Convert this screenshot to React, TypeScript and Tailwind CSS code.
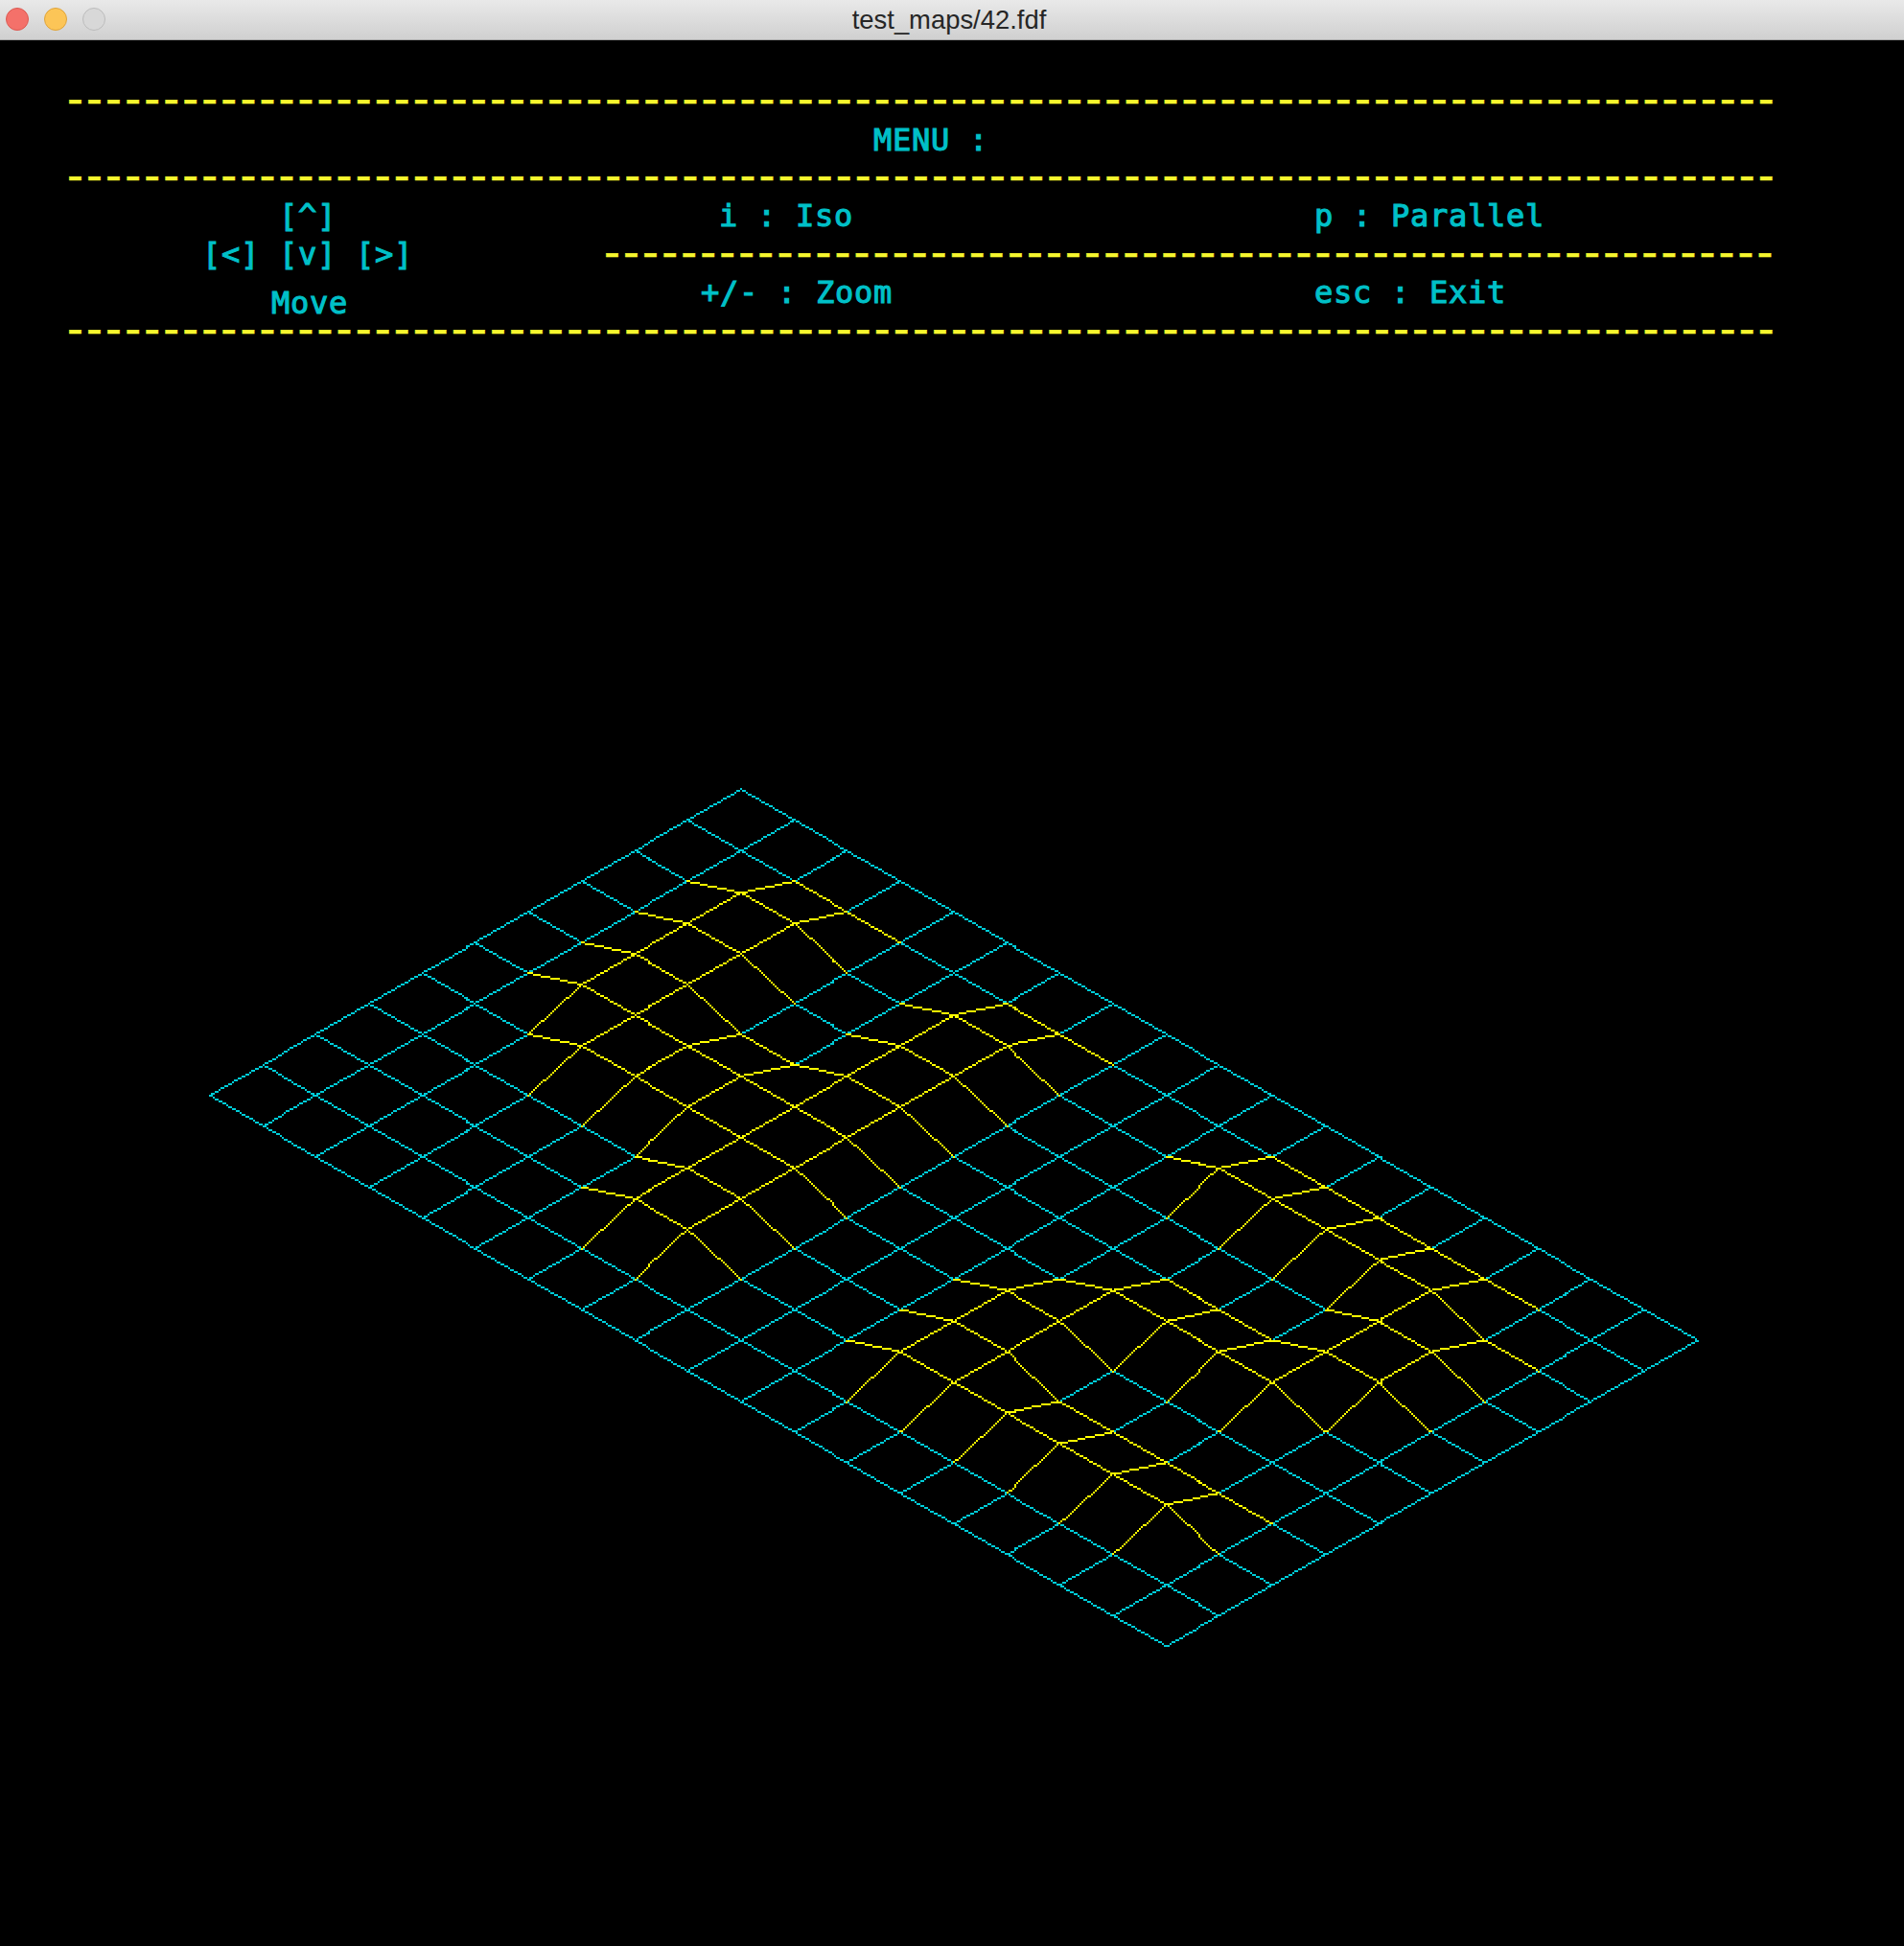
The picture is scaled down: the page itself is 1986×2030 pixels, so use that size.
import React from 'react';

// height map of test_maps/42.fdf
const MAP = [
  '0 0 0 0 0 0 0 0 0 0 0 0 0 0 0 0 0 0 0',
  '0 0 0 0 0 0 0 0 0 0 0 0 0 0 0 0 0 0 0',
  '0 0 1 1 0 0 1 1 0 0 0 1 1 1 1 1 0 0 0',
  '0 0 1 1 0 0 1 1 0 0 0 0 0 0 0 1 1 0 0',
  '0 0 1 1 0 0 1 1 0 0 0 0 0 0 0 1 1 0 0',
  '0 0 1 1 1 1 1 1 0 0 0 0 1 1 1 1 0 0 0',
  '0 0 0 1 1 1 1 1 0 0 0 1 1 0 0 0 0 0 0',
  '0 0 0 0 0 0 1 1 0 0 0 1 1 0 0 0 0 0 0',
  '0 0 0 0 0 0 1 1 0 0 0 1 1 1 1 1 1 0 0',
  '0 0 0 0 0 0 0 0 0 0 0 0 0 0 0 0 0 0 0',
  '0 0 0 0 0 0 0 0 0 0 0 0 0 0 0 0 0 0 0',
].map((row) => row.split(' ').map(Number));

// the window draws in points, each one is 2x2 on screen
function project(r: number, c: number) {
  return {
    x: 386 + (c - r) * 27.71,
    y: 411.3 + (c + r) * 15.96 - MAP[r][c] * 10,
  };
}

function linePixels(r1: number, c1: number, r2: number, c2: number) {
  const a = project(r1, c1);
  const b = project(r2, c2);
  const steps = Math.round(Math.max(Math.abs(b.x - a.x), Math.abs(b.y - a.y)));
  let d = '';
  for (let i = 0; i <= steps; i++) {
    const x = Math.round(a.x + ((b.x - a.x) * i) / steps) * 2;
    const y = Math.round(a.y + ((b.y - a.y) * i) / steps) * 2;
    d += `M${x} ${y}h2v2h-2z`;
  }
  return d;
}

function buildPaths() {
  let cyan = '';
  let yellow = '';
  MAP.forEach((row, r) => {
    row.forEach((z, c) => {
      if (c < row.length - 1) {
        const d = linePixels(r, c, r, c + 1);
        // the fdf colours a horizontal edge from the row below too
        const below = r < MAP.length - 1 ? MAP[r + 1][c] : 0;
        if (z || row[c + 1] || below) yellow += d;
        else cyan += d;
      }
      if (r < MAP.length - 1) {
        const d = linePixels(r, c, r + 1, c);
        if (z || MAP[r + 1][c]) yellow += d;
        else cyan += d;
      }
    });
  });
  return { cyan, yellow };
}

function Dashes({ count, className = '' }: { count: number; className?: string }) {
  return (
    <div className={`-ml-[8px] h-[40px] whitespace-pre font-['DejaVu_Sans_Mono',monospace] text-[48px] font-normal leading-[32px] tracking-[-8.855px] text-[#f6f62e] [-webkit-text-stroke:0.5px_#f6f62e] ${className}`}>
      {'-'.repeat(count)}
    </div>
  );
}

function Label({ children, className = '' }: { children: React.ReactNode; className?: string }) {
  return (
    <div className={`h-[40px] whitespace-pre text-[32px] leading-[40px] ${className}`}>
      {children}
    </div>
  );
}

function Menu() {
  return (
    <div className="ml-[72px] h-[358px] w-[1780px] pt-[44px] font-['DejaVu_Sans_Mono',monospace] tracking-[0.74px] text-[#00c0c8] [-webkit-text-stroke:1.1px_#00c0c8]">
      <Dashes count={89} />
      <Label className="pl-[839px]">MENU :</Label>
      <Dashes count={89} />
      <div className="-mt-[1px] flex">
        <div className="w-[560px]">
          <Label className="pl-[219px]">[^]</Label>
          <Label className="pl-[139px]">[&lt;] [v] [&gt;]</Label>
          <Label className="mt-[11px] pl-[211px]">Move</Label>
        </div>
        <div className="w-[1220px]">
          <div className="flex">
            <Label className="w-[610px] pl-[118px]">i : Iso</Label>
            <Label className="pl-[129px]">p : Parallel</Label>
          </div>
          <Dashes count={61} className="mt-[1px]" />
          <div className="-mt-[1px] flex">
            <Label className="w-[610px] pl-[99px]">+/- : Zoom</Label>
            <Label className="pl-[129px]">esc : Exit</Label>
          </div>
        </div>
      </div>
      <Dashes count={89} className="-mt-[10px]" />
    </div>
  );
}

export default function App() {
  const { cyan, yellow } = buildPaths();

  return (
    <div className="h-[2030px] w-[1986px] overflow-hidden bg-black">
      {/* title bar */}
      <div className="relative flex h-[42px] items-center justify-center border-b border-[#a8a8a8] bg-gradient-to-b from-[#e9e9e9] to-[#d0d0d0]">
        <div className="absolute left-[6px] top-[8px] flex gap-[16px]">
          <div className="h-[24px] w-[24px] rounded-full border border-[#dc5a52] bg-[#f4716a]" />
          <div className="h-[24px] w-[24px] rounded-full border border-[#dfa43a] bg-[#fcc557]" />
          <div className="h-[24px] w-[24px] rounded-full border border-[#bcbcbc] bg-[#d8d8d8]" />
        </div>
        <span className="-ml-[6px] font-['Liberation_Sans',sans-serif] text-[27.4px] leading-none text-[#262626]">test_maps/42.fdf</span>
      </div>

      <Menu />

      {/* wireframe, drawn pixel by pixel like the mlx window does */}
      <svg className="block" width={1986} height={1630} viewBox="0 400 1986 1630" shapeRendering="crispEdges">
        <path d={cyan} fill="#00ccd8" />
        <path d={yellow} fill="#ffff00" />
      </svg>
    </div>
  );
}
